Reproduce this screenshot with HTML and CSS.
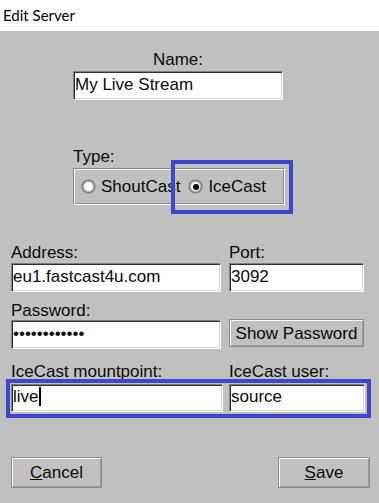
FILE: index.html
```html
<!DOCTYPE html>
<html>
<head>
<meta charset="utf-8">
<link rel="stylesheet" href="styles.css">
</head>
<body>
<div class="window">
  <div class="titlebar">Edit Server</div>
  <div class="dialog">
    <div class="name-block">
      <div class="label">Name:</div>
      <div class="box name-input">My Live Stream</div>
    </div>
    <div class="type-block">
      <div class="label">Type:</div>
      <div class="groupbox">
        <div class="radio"><span class="dot"></span><span>ShoutCast</span></div>
        <div class="radio checked"><span class="dot"></span><span>IceCast</span></div>
      </div>
    </div>
    <div class="row row-addr">
      <div class="field gap1"><div class="label">Address:</div><div class="box">eu1.fastcast4u.com</div></div>
      <div class="field gap1"><div class="label">Port:</div><div class="box">3092</div></div>
    </div>
    <div class="row row-pass">
      <div class="field gap0"><div class="label">Password:</div><div class="box pw">••••••••••••</div></div>
      <div class="field btn-cell"><div class="button show-btn">Show Password</div></div>
    </div>
    <div class="row row-ice">
      <div class="field gap3"><div class="label">IceCast mountpoint:</div><div class="box short">live<span class="caret"></span></div></div>
      <div class="field gap3"><div class="label">IceCast user:</div><div class="box short">source</div></div>
    </div>
    <div class="actions">
      <div class="button action"><u>C</u>ancel</div>
      <div class="button action save"><u>S</u>ave</div>
    </div>
    <div class="mark mark-type"></div>
    <div class="mark mark-ice"></div>
  </div>
</div>
</body>
</html>
```
FILE: styles.css
```css
* { box-sizing: border-box; }
html, body { margin: 0; padding: 0; }
body { width: 379px; height: 503px; overflow: hidden; background: #c0c0c0; }
.window { width: 379px; height: 503px; display: flex; flex-direction: column; }
.titlebar {
  height: 31px; background: #fff; color: #000;
  font-family: Lato, "Noto Sans", sans-serif; font-size: 15px; line-height: 31px;
  padding-left: 3px;
}
.dialog {
  position: relative; flex: 1; background: #c0c0c0;
  font-family: "Liberation Sans", Arial, sans-serif; font-size: 17px; color: #0a0a0a;
  display: flex; flex-direction: column;
  padding-top: 20px;
}
.label { line-height: 18px; height: 18px; white-space: nowrap; }
.box {
  height: 29px; line-height: 25px; padding-left: 1px;
  background: #fff; white-space: nowrap; overflow: hidden;
  border: 1px solid; border-color: #808080 #fff #fff #808080;
  box-shadow: inset 1px 1px #303030, inset -1px -1px #d8d8d8;
}
.box.short { height: 28px; line-height: 24px; }
.name-block { margin-left: 73px; width: 210px; display: flex; flex-direction: column; align-items: center; gap: 2px; }
.name-input { width: 210px; }
.type-block { margin-left: 73px; margin-top: 48px; display: flex; flex-direction: column; gap: 2px; }
.groupbox {
  width: 212px; height: 37px; display: flex; align-items: center; padding-left: 8px;
  border: 1px solid; border-color: #8a8a8a #fff #fff #8a8a8a;
  box-shadow: inset 1px 1px #f4f4f4, inset -1px -1px #8a8a8a;
}
.radio { display: flex; align-items: center; gap: 6px; }
.radio + .radio { margin-left: 9px; }
.dot {
  width: 13px; height: 13px; border-radius: 50%;
  background: radial-gradient(circle, #fff 0 38%, #bcbcbc 55%, #3a3a3a 75%, #1e1e1e 100%);
  box-shadow: 0 0 1px 0.5px rgba(40,40,40,0.45);
  position: relative;
}
.radio.checked .dot::after {
  content: ""; position: absolute; left: 3.5px; top: 3.5px; width: 6px; height: 6px;
  border-radius: 50%; background: #000;
}
.row { display: grid; grid-template-columns: 210px 135px; column-gap: 8px; margin-left: 11px; }
.row-addr { margin-top: 39px; }
.row-pass { margin-top: 10px; }
.row-ice { margin-top: 14px; grid-template-columns: 212px 136px; column-gap: 6px; }
.field { display: flex; flex-direction: column; }
.gap0 { gap: 0; }
.gap1 { gap: 1px; }
.gap3 { gap: 3px; }
.btn-cell { justify-content: flex-end; }
.button {
  display: flex; align-items: center; justify-content: center;
  background: #c0c0c0; white-space: nowrap;
  border: 1px solid #8c8c8c;
  box-shadow: inset 1px 1px #fafafa, inset -1px -1px #9a9a9a;
}
.show-btn { height: 28px; margin-bottom: 2px; padding-top: 1px; }
.pw { letter-spacing: 0; padding-left: 1px; font-size: 17px; }
.caret { display: inline-block; width: 2px; height: 19px; background: #000; vertical-align: -4px; margin-left: 0; }
.actions { display: flex; justify-content: space-between; margin-top: 45px; padding: 0 9px 0 11px; }
.action { width: 91px; height: 31px; padding-top: 1px; }
.action.save { width: 92px; }
.mark { position: absolute; border: 4px solid #3f48cc; }
.mark-type { left: 171px; top: 129px; width: 122px; height: 54px; }
.mark-ice { left: 6px; top: 348px; width: 365px; height: 39px; }
```
